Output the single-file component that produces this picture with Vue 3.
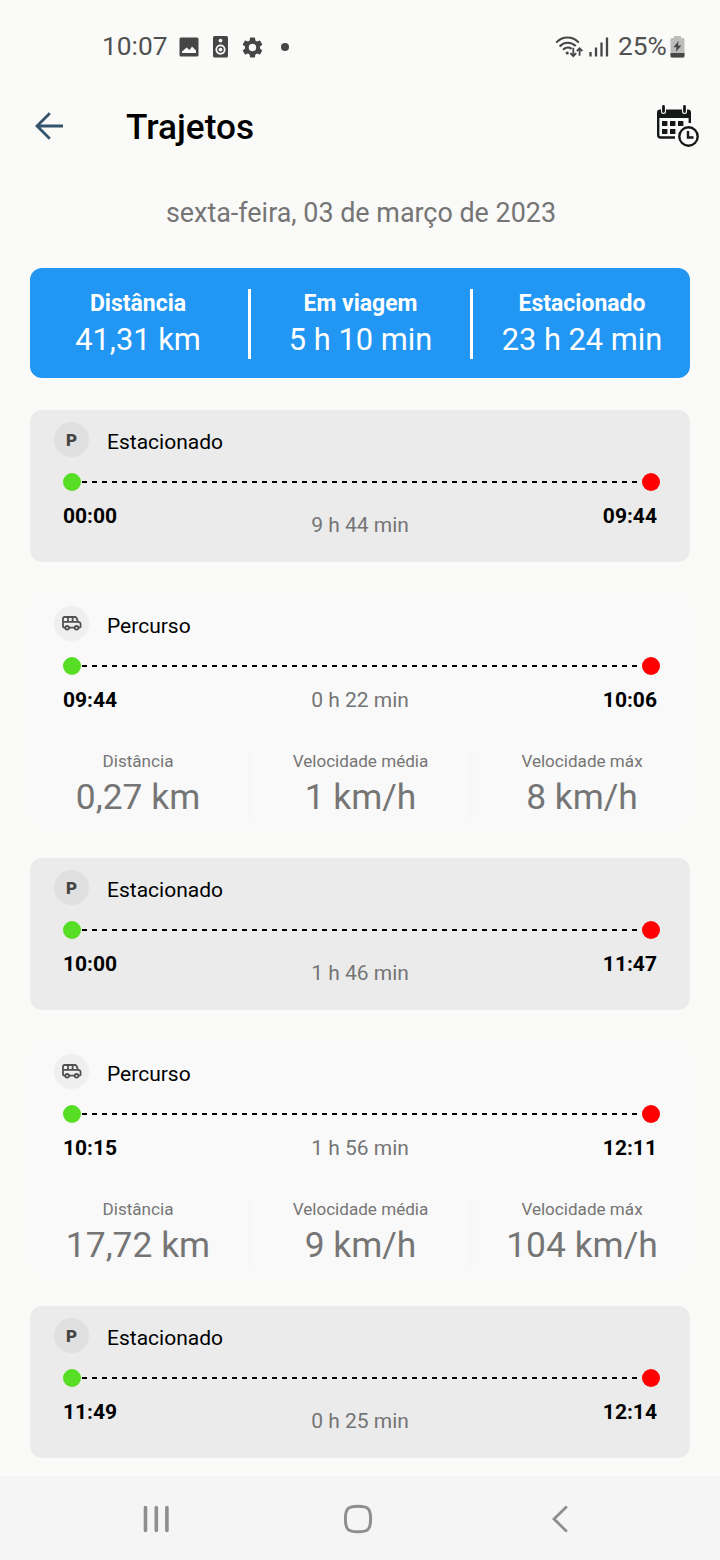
<template>
    <div class="screen">
        <header class="status">
            <span class="clock">10:07</span>
            <svg class="st-image" width="20" height="20" viewBox="0 0 20 20">
                <path fill="#464646" fill-rule="evenodd" d="M2 0.5H18Q19.5 0.5 19.5 2V18Q19.5 19.5 18 19.5H2Q0.5 19.5 0.5 18V2Q0.5 0.5 2 0.5ZM3 16H17V13.5L13 9.5L10.6 13L7.6 10.5L3 14.5Z" />
            </svg>
            <svg class="st-speaker" width="15" height="22" viewBox="0 0 15 22">
                <rect width="15" height="21.5" rx="1.5" fill="#464646" />
                <circle cx="7.5" cy="4.6" r="1.9" fill="#fafaf8" />
                <circle cx="7.5" cy="13.6" r="4.2" fill="none" stroke="#fafaf8" stroke-width="1.8" />
                <circle cx="7.5" cy="13.6" r="1.9" fill="#fafaf8" />
            </svg>
            <svg class="st-gear" width="25" height="25" viewBox="0 0 24 24">
                <path fill="#464646" d="M19.14 12.94c.04-.3.06-.61.06-.94s-.02-.64-.07-.94l2.03-1.58a.49.49 0 0 0 .12-.61l-1.92-3.32a.49.49 0 0 0-.59-.22l-2.39.96c-.5-.38-1.03-.7-1.62-.94l-.36-2.54a.48.48 0 0 0-.48-.41h-3.84c-.24 0-.43.17-.47.41l-.36 2.54c-.59.24-1.13.57-1.62.94l-2.39-.96a.48.48 0 0 0-.59.22L2.74 8.87c-.12.21-.08.47.12.61l2.03 1.58c-.05.3-.09.63-.09.94s.02.64.07.94l-2.03 1.58a.49.49 0 0 0-.12.61l1.92 3.32c.12.22.37.29.59.22l2.39-.96c.5.38 1.03.7 1.62.94l.36 2.54c.05.24.24.41.48.41h3.84c.24 0 .44-.17.47-.41l.36-2.54c.59-.24 1.13-.56 1.62-.94l2.39.96c.22.08.47 0 .59-.22l1.92-3.32a.48.48 0 0 0-.12-.61zM12 15.6A3.6 3.6 0 1 1 12 8.4a3.6 3.6 0 0 1 0 7.2z" />
            </svg>
            <span class="st-dot"></span>
            <svg class="st-wifi" width="30" height="24" viewBox="0 0 30 24" fill="none" stroke="#464646" stroke-width="2.1">
                <path d="M1.2 7.6C7.5 0.8 17.5 0.8 23.8 7.6" />
                <path d="M4.6 11.4C9.2 6.6 16 6.6 20.8 11" />
                <path d="M8 14.8C10.6 12 14.2 12 16.6 13.8" />
                <circle cx="12.2" cy="18" r="1.6" fill="#464646" stroke="none" />
                <path stroke-width="1.8" d="M18.3 12.8V21M15.4 18.2L18.3 21.2L21.2 18.2M24.6 20.8V13.6M21.8 16.2L24.6 13.2L27.4 16.2" />
            </svg>
            <svg class="st-signal" width="20" height="22" viewBox="0 0 20 22" stroke="#464646" stroke-width="2.3">
                <path d="M1.5 16V20.5M7 11.5V20.5M12.5 6.5V20.5M18 1.5V20.5" />
            </svg>
            <span class="percent">25%</span>
            <svg class="st-battery" width="15" height="22" viewBox="0 0 15 22">
                <path fill="#bcbcba" d="M4 0H11V2H13Q14.5 2 14.5 3.5V20Q14.5 21.5 13 21.5H2Q0.5 21.5 0.5 20V3.5Q0.5 2 2 2H4Z" />
                <path fill="#464646" d="M0.5 17H14.5V20Q14.5 21.5 13 21.5H2Q0.5 21.5 0.5 20ZM8.6 5L3.4 11.2H6.6L5.8 16L11.4 9.6H8Z" />
            </svg>
        </header>

        <div class="appbar">
            <svg class="back" width="28" height="28" viewBox="0 0 28 28" fill="none" stroke="#34546b" stroke-width="2.8">
                <path d="M28 14H2.5M14.8 1.2L2 14L14.8 26.8" />
            </svg>
            <h1>Trajetos</h1>
            <svg class="calendar" width="44" height="44" viewBox="0 0 44 44">
                <path fill="#141816" d="M4 5.5H32Q35 5.5 35 8.5V14H1V8.5Q1 5.5 4 5.5Z" />
                <path fill="none" stroke="#141816" stroke-width="2.4" d="M2.2 13V31Q2.2 33.5 4.7 33.5H19M33.8 13V19" />
                <path stroke="#fafaf8" stroke-width="5" stroke-linecap="round" d="M7.5 3V7.5M28.5 3V7.5" />
                <path stroke="#141816" stroke-width="2.8" stroke-linecap="round" d="M7.5 2.4V7.5M28.5 2.4V7.5" />
                <path fill="#141816" d="M6 17H11.4V22H6ZM14 17H19.4V22H14ZM22 17H27.4V22H22ZM6 25H11.4V30H6ZM14 25H19.4V30H14Z" />
                <circle cx="32.5" cy="32.5" r="11.6" fill="#fafaf8" />
                <circle cx="32.5" cy="32.5" r="9.2" fill="none" stroke="#141816" stroke-width="2.4" />
                <path fill="none" stroke="#141816" stroke-width="2.4" d="M32 27V33.5H37.5" />
            </svg>
        </div>

        <p class="date">sexta-feira, 03 de março de 2023</p>

        <section class="columns summary">
            <div v-for="item in summary" :key="item.label" class="column">
                <span class="label">{{ item.label }}</span>
                <span class="value">{{ item.value }}</span>
            </div>
        </section>

        <section v-for="(item, i) in items" :key="i" class="card" :class="{parked: !item.stats}">
            <div class="heading">
                <div class="badge">
                    <svg v-if="item.stats" width="20" height="16" viewBox="0 0 20 16" fill="none" stroke="#505050" stroke-width="1.8">
                        <path d="M3.2 11.6H2.2Q1 11.6 1 10.4V2.5Q1 1 2.5 1H13Q14.2 1 14.7 2.2L16 5.8L17.6 6.4Q18.6 6.8 18.6 7.8V10.4Q18.6 11.6 17.4 11.6H16.6M7 11.6H12.4M1 5.8H16M6 1V5.8M10.6 1V5.8" />
                        <circle cx="5.1" cy="11.8" r="1.8" />
                        <circle cx="14.5" cy="11.8" r="1.8" />
                    </svg>
                    <span v-else>P</span>
                </div>
                <h2>{{ item.stats ? "Percurso" : "Estacionado" }}</h2>
            </div>
            <div class="track">
                <span class="point start"></span>
                <span class="line"></span>
                <span class="point end"></span>
            </div>
            <div class="times">
                <b>{{ item.start }}</b>
                <span class="duration">{{ item.duration }}</span>
                <b>{{ item.end }}</b>
            </div>
            <div v-if="item.stats" class="columns stats">
                <div v-for="(value, n) in item.stats" :key="n" class="column">
                    <span class="label">{{ statLabels[n] }}</span>
                    <span class="value">{{ value }}</span>
                </div>
            </div>
        </section>

        <nav class="navbar">
            <svg width="26" height="28" viewBox="0 0 26 28" stroke="#8e8e8e" stroke-width="3.6" stroke-linecap="round">
                <path d="M2.5 2.5V25.5M13.3 2.5V25.5M23.9 2.5V25.5" />
            </svg>
            <svg class="home" width="30" height="30" viewBox="0 0 30 30" fill="none" stroke="#8e8e8e" stroke-width="3">
                <path d="M15 2.2C24.5 2.2 27.6 4 27.6 15S24.5 27.8 15 27.8S2.4 26 2.4 15S5.5 2.2 15 2.2Z" />
            </svg>
            <svg width="16" height="28" viewBox="0 0 16 28" fill="none" stroke="#8e8e8e" stroke-width="2.8" stroke-linecap="round">
                <path d="M14 2.2L2 14L14 25.8" />
            </svg>
        </nav>
    </div>
</template>

<script setup>
const summary = [
    {label: "Distância", value: "41,31 km"},
    {label: "Em viagem", value: "5 h 10 min"},
    {label: "Estacionado", value: "23 h 24 min"},
]

const statLabels = ["Distância", "Velocidade média", "Velocidade máx"]

const items = [
    {start: "00:00", end: "09:44", duration: "9 h 44 min"},
    {start: "09:44", end: "10:06", duration: "0 h 22 min", stats: ["0,27 km", "1 km/h", "8 km/h"]},
    {start: "10:00", end: "11:47", duration: "1 h 46 min"},
    {start: "10:15", end: "12:11", duration: "1 h 56 min", stats: ["17,72 km", "9 km/h", "104 km/h"]},
    {start: "11:49", end: "12:14", duration: "0 h 25 min"},
]
</script>

<style>
body {
    margin: 0;
    background-color: #fafaf8;
}
</style>

<style scoped>
.screen {
    width: 720px;
    height: 1560px;
    display: flex;
    flex-direction: column;
    box-sizing: border-box;
    overflow: hidden;
    background-color: #fafaf8;
    font-family: Roboto, sans-serif;
    color: #000;
}
svg {
    display: block;
    flex: none;
}
.status {
    height: 94px;
    flex: none;
    display: flex;
    align-items: center;
    padding: 0 35px 0 102px;
    color: #505050;
    font-size: 26.3px;
}
.clock {
    width: 77px;
    padding-bottom: 2px;
}
.st-speaker {
    margin-left: 14px;
}
.st-gear {
    margin-left: 12px;
}
.st-dot {
    width: 8px;
    height: 8px;
    margin-left: 16px;
    border-radius: 50%;
    background-color: #464646;
}
.st-wifi {
    margin-left: auto;
}
.st-signal {
    margin-left: 4px;
}
.percent {
    width: 53px;
    margin-left: 9px;
    padding-bottom: 2px;
}
.st-battery {
    margin-left: -1px;
}
.appbar {
    height: 64px;
    flex: none;
    display: flex;
    align-items: center;
    padding: 0 20px 0 35px;
}
h1 {
    margin: 2px auto 0 63px;
    font-size: 35.2px;
    font-weight: 500;
}
.date {
    margin: 39px 0 38px;
    padding-left: 2px;
    font-size: 26.9px;
    line-height: 33px;
    text-align: center;
    color: #757575;
}
.columns {
    display: grid;
    grid-template-columns: 216px 228px 216px;
}
.column {
    display: flex;
    flex-direction: column;
    align-items: center;
    white-space: nowrap;
}
.column:nth-child(2) {
    margin: 0 1px 0 2px;
    border: solid #fff;
    border-width: 0 3px;
}
.summary {
    height: 70px;
    margin: 0 30px;
    padding: 21px 0 19px;
    border-radius: 12px;
    background-color: #2196f3;
    color: #fff;
}
.summary .label {
    padding-top: 1px;
    font-size: 23px;
    font-weight: 700;
    line-height: 28px;
}
.summary .value {
    padding-top: 3px;
    font-size: 30.8px;
    line-height: 38px;
}
.card {
    height: 232px;
    flex: none;
    margin: 32px 30px 0;
    border-radius: 12px;
    background-color: #f9f9f9;
}
.card.parked {
    height: 152px;
    background-color: #ebebeb;
}
.heading {
    height: 63px;
    display: flex;
    align-items: center;
    padding-left: 24px;
}
.badge {
    width: 35px;
    height: 35px;
    margin-bottom: 4px;
    display: flex;
    align-items: center;
    justify-content: center;
    border-radius: 50%;
    background-color: #efefef;
    font-size: 17px;
    font-weight: 900;
    color: #444;
}
.parked .badge {
    background-color: #e0e0e0;
}
h2 {
    margin: 0 0 0 18px;
    font-size: 21px;
    font-weight: 400;
}
.track {
    display: flex;
    align-items: center;
    padding: 0 30px 0 33px;
}
.point {
    width: 18px;
    height: 18px;
    border-radius: 50%;
}
.start {
    background-color: #57dd23;
}
.end {
    background-color: #f00;
}
.line {
    flex: 1;
    height: 2px;
    margin: 0 3px 0 1px;
    background: repeating-linear-gradient(90deg, #000 0 5px, transparent 5px 10px);
}
.times {
    display: flex;
    justify-content: space-between;
    padding: 13px 33px 0;
    font-size: 21px;
    line-height: 25px;
}
.times b {
    font-weight: 700;
}
.duration {
    color: #757575;
}
.parked .duration {
    padding-top: 9px;
}
.stats {
    height: 66px;
    padding-top: 38px;
    color: #757575;
}
.stats .column:nth-child(2) {
    border-color: #f7f7f7;
}
.stats .label {
    font-size: 17.1px;
    line-height: 21px;
}
.stats .value {
    padding-top: 3px;
    font-size: 35.4px;
    line-height: 45px;
}
.navbar {
    height: 84px;
    flex: none;
    margin-top: 18px;
    display: flex;
    align-items: center;
    justify-content: space-between;
    box-sizing: border-box;
    padding: 1px 152px 0 143px;
    background-color: #f5f5f5;
}
.home {
    margin-right: 6px;
}
</style>
